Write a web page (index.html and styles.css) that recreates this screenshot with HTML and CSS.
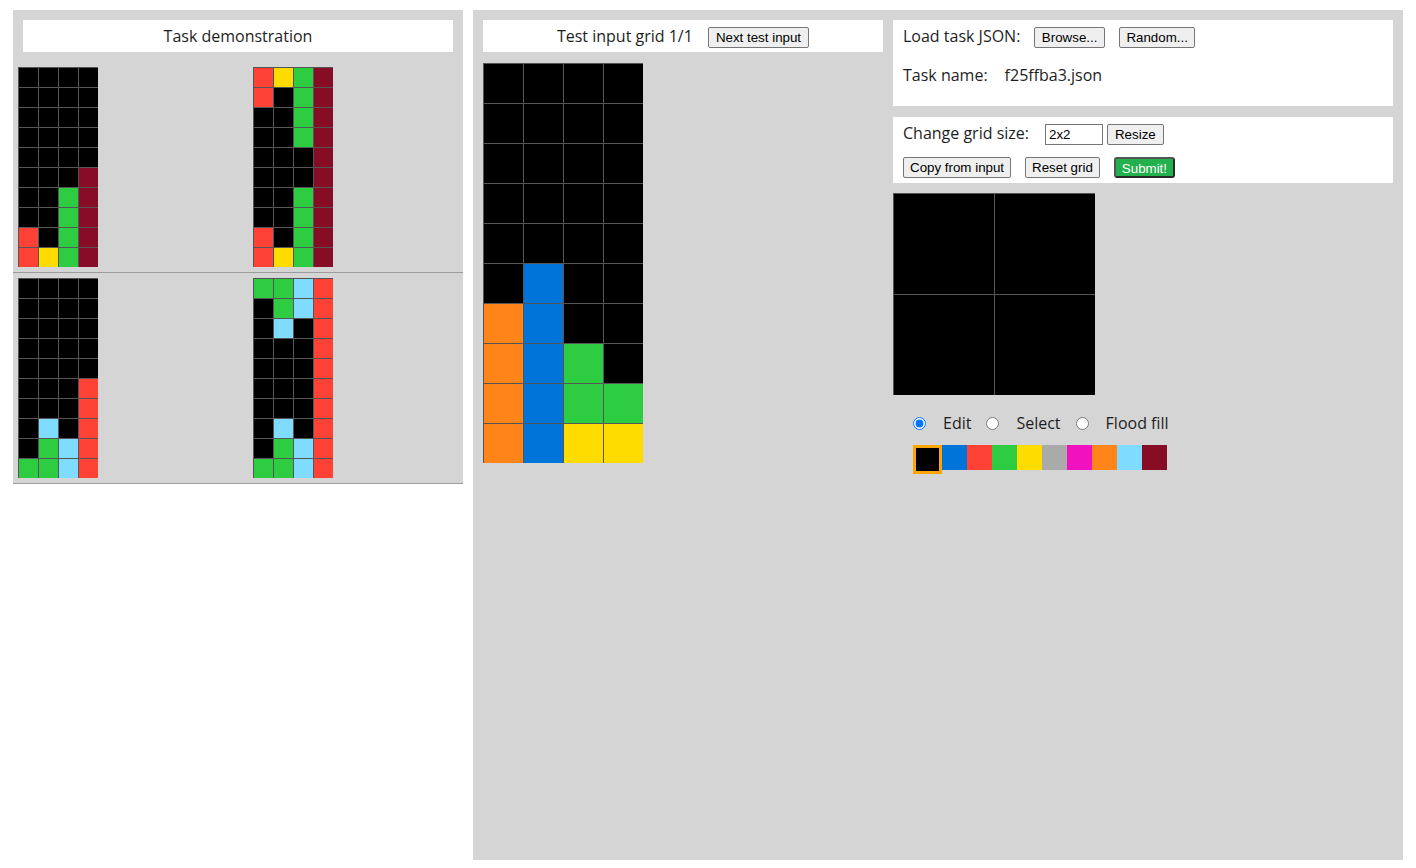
FILE: index.html
```html
<!DOCTYPE html>
<html>
<head>
<meta charset="utf-8">
<title>ARC testing interface</title>
<link rel="stylesheet" href="styles.css">
</head>
<body>
<div class="workspace">
  <section class="demo-view">
    <div class="text-box">Task demonstration</div>
    <div class="pair">
      <div class="pair-cell">
        <div class="grid small">
          <span class="k0"></span><span class="k0"></span><span class="k0"></span><span class="k0"></span>
          <span class="k0"></span><span class="k0"></span><span class="k0"></span><span class="k0"></span>
          <span class="k0"></span><span class="k0"></span><span class="k0"></span><span class="k0"></span>
          <span class="k0"></span><span class="k0"></span><span class="k0"></span><span class="k0"></span>
          <span class="k0"></span><span class="k0"></span><span class="k0"></span><span class="k0"></span>
          <span class="k0"></span><span class="k0"></span><span class="k0"></span><span class="k9"></span>
          <span class="k0"></span><span class="k0"></span><span class="k3"></span><span class="k9"></span>
          <span class="k0"></span><span class="k0"></span><span class="k3"></span><span class="k9"></span>
          <span class="k2"></span><span class="k0"></span><span class="k3"></span><span class="k9"></span>
          <span class="k2"></span><span class="k4"></span><span class="k3"></span><span class="k9"></span>
        </div>
      </div>
      <div class="pair-cell">
        <div class="grid small">
          <span class="k2"></span><span class="k4"></span><span class="k3"></span><span class="k9"></span>
          <span class="k2"></span><span class="k0"></span><span class="k3"></span><span class="k9"></span>
          <span class="k0"></span><span class="k0"></span><span class="k3"></span><span class="k9"></span>
          <span class="k0"></span><span class="k0"></span><span class="k3"></span><span class="k9"></span>
          <span class="k0"></span><span class="k0"></span><span class="k0"></span><span class="k9"></span>
          <span class="k0"></span><span class="k0"></span><span class="k0"></span><span class="k9"></span>
          <span class="k0"></span><span class="k0"></span><span class="k3"></span><span class="k9"></span>
          <span class="k0"></span><span class="k0"></span><span class="k3"></span><span class="k9"></span>
          <span class="k2"></span><span class="k0"></span><span class="k3"></span><span class="k9"></span>
          <span class="k2"></span><span class="k4"></span><span class="k3"></span><span class="k9"></span>
        </div>
      </div>
    </div>
    <div class="pair">
      <div class="pair-cell">
        <div class="grid small">
          <span class="k0"></span><span class="k0"></span><span class="k0"></span><span class="k0"></span>
          <span class="k0"></span><span class="k0"></span><span class="k0"></span><span class="k0"></span>
          <span class="k0"></span><span class="k0"></span><span class="k0"></span><span class="k0"></span>
          <span class="k0"></span><span class="k0"></span><span class="k0"></span><span class="k0"></span>
          <span class="k0"></span><span class="k0"></span><span class="k0"></span><span class="k0"></span>
          <span class="k0"></span><span class="k0"></span><span class="k0"></span><span class="k2"></span>
          <span class="k0"></span><span class="k0"></span><span class="k0"></span><span class="k2"></span>
          <span class="k0"></span><span class="k8"></span><span class="k0"></span><span class="k2"></span>
          <span class="k0"></span><span class="k3"></span><span class="k8"></span><span class="k2"></span>
          <span class="k3"></span><span class="k3"></span><span class="k8"></span><span class="k2"></span>
        </div>
      </div>
      <div class="pair-cell">
        <div class="grid small">
          <span class="k3"></span><span class="k3"></span><span class="k8"></span><span class="k2"></span>
          <span class="k0"></span><span class="k3"></span><span class="k8"></span><span class="k2"></span>
          <span class="k0"></span><span class="k8"></span><span class="k0"></span><span class="k2"></span>
          <span class="k0"></span><span class="k0"></span><span class="k0"></span><span class="k2"></span>
          <span class="k0"></span><span class="k0"></span><span class="k0"></span><span class="k2"></span>
          <span class="k0"></span><span class="k0"></span><span class="k0"></span><span class="k2"></span>
          <span class="k0"></span><span class="k0"></span><span class="k0"></span><span class="k2"></span>
          <span class="k0"></span><span class="k8"></span><span class="k0"></span><span class="k2"></span>
          <span class="k0"></span><span class="k3"></span><span class="k8"></span><span class="k2"></span>
          <span class="k3"></span><span class="k3"></span><span class="k8"></span><span class="k2"></span>
        </div>
      </div>
    </div>
  </section>

  <section class="eval-view">
    <div class="test-column">
      <div class="text-box test-title">
        <span>Test input grid 1/1</span>
        <button class="btn">Next test input</button>
      </div>
      <div class="grid large">
        <span class="k0"></span><span class="k0"></span><span class="k0"></span><span class="k0"></span>
        <span class="k0"></span><span class="k0"></span><span class="k0"></span><span class="k0"></span>
        <span class="k0"></span><span class="k0"></span><span class="k0"></span><span class="k0"></span>
        <span class="k0"></span><span class="k0"></span><span class="k0"></span><span class="k0"></span>
        <span class="k0"></span><span class="k0"></span><span class="k0"></span><span class="k0"></span>
        <span class="k0"></span><span class="k1"></span><span class="k0"></span><span class="k0"></span>
        <span class="k7"></span><span class="k1"></span><span class="k0"></span><span class="k0"></span>
        <span class="k7"></span><span class="k1"></span><span class="k3"></span><span class="k0"></span>
        <span class="k7"></span><span class="k1"></span><span class="k3"></span><span class="k3"></span>
        <span class="k7"></span><span class="k1"></span><span class="k4"></span><span class="k4"></span>
      </div>
    </div>

    <div class="output-column">
      <div class="panel load-panel">
        <div class="row">
          <span class="label">Load task JSON:</span>
          <button class="btn gap">Browse...</button>
          <button class="btn gap">Random...</button>
        </div>
        <div class="row name-row">
          <span class="label">Task name:</span>
          <span class="label task-name">f25ffba3.json</span>
        </div>
      </div>

      <div class="panel size-panel">
        <div class="row">
          <span class="label">Change grid size:</span>
          <input class="size-input" type="text" value="2x2">
          <button class="btn resize">Resize</button>
        </div>
        <div class="row actions">
          <button class="btn">Copy from input</button>
          <button class="btn gap">Reset grid</button>
          <button class="btn gap submit">Submit!</button>
        </div>
      </div>

      <div class="grid output">
        <span class="k0"></span><span class="k0"></span>
        <span class="k0"></span><span class="k0"></span>
      </div>

      <div class="tools">
        <label class="tool"><input type="radio" name="tool" checked><span>Edit</span></label>
        <label class="tool"><input type="radio" name="tool"><span>Select</span></label>
        <label class="tool"><input type="radio" name="tool"><span>Flood fill</span></label>
      </div>

      <div class="palette">
        <span class="sym k0 selected"></span>
        <span class="sym k1"></span>
        <span class="sym k2"></span>
        <span class="sym k3"></span>
        <span class="sym k4"></span>
        <span class="sym k5"></span>
        <span class="sym k6"></span>
        <span class="sym k7"></span>
        <span class="sym k8"></span>
        <span class="sym k9"></span>
      </div>
    </div>
  </section>
</div>
</body>
</html>
```

FILE: styles.css
```css
html, body {
  margin: 0;
  padding: 0;
  background: #fff;
}

body {
  font-family: "Open Sans", "Liberation Sans", sans-serif;
  font-size: 16px;
  color: #1e1e1e;
  padding: 10px 13px 0 13px;
}

.workspace {
  display: flex;
  gap: 10px;
  align-items: flex-start;
}

/* ---------- demonstration ---------- */
.demo-view {
  width: 450px;
  background: #d5d5d5;
  flex: none;
}

.text-box {
  background: #fff;
  margin: 10px;
  height: 32px;
  line-height: 32px;
  text-align: center;
}

.pair {
  display: flex;
  padding: 5px;
  border-bottom: 1px solid #9c9c9c;
}

.pair-cell {
  flex: none;
  width: 235px;
}

.pair-cell + .pair-cell {
  flex: 1;
  width: auto;
}

/* ---------- grids ---------- */
.grid {
  display: grid;
  width: max-content;
}

.grid span {
  display: block;
  box-sizing: border-box;
  border-top: 1px solid #555;
  border-left: 1px solid #555;
}

.grid.small {
  grid-template-columns: repeat(4, 20px);
  grid-auto-rows: 20px;
}

.grid.large {
  grid-template-columns: repeat(4, 40px);
  grid-auto-rows: 40px;
}

.grid.output {
  grid-template-columns: repeat(2, 101px);
  grid-auto-rows: 101px;
}

.k0 { background: #000000; }
.k1 { background: #0074d9; }
.k2 { background: #ff4136; }
.k3 { background: #2ecc40; }
.k4 { background: #ffdc00; }
.k5 { background: #aaaaaa; }
.k6 { background: #f012be; }
.k7 { background: #ff851b; }
.k8 { background: #7fdbff; }
.k9 { background: #870c25; }

/* ---------- evaluation ---------- */
.eval-view {
  width: 930px;
  height: 850px;
  background: #d5d5d5;
  display: flex;
  flex: none;
}

.test-column {
  width: 400px;
  margin: 10px 0 0 10px;
}

.test-column .text-box {
  margin: 0 0 11px 0;
}

.test-title {
  display: flex;
  justify-content: center;
  align-items: center;
  gap: 15px;
}

.test-title .btn {
  margin-top: 2px;
  padding: 0 7px;
}

.output-column {
  width: 500px;
  margin: 10px 0 0 10px;
}

.panel {
  background: #fff;
  box-sizing: border-box;
  padding: 7px 10px 0 10px;
}

.load-panel {
  height: 86px;
  margin-bottom: 11px;
}

.size-panel {
  height: 66px;
  margin-bottom: 10px;
}

.row {
  display: flex;
  align-items: center;
  height: 21px;
}

.row .label {
  align-self: flex-start;
  line-height: 19px;
}

.name-row {
  margin-top: 18px;
}

.task-name {
  margin-left: 17px;
}

.actions {
  margin-top: 12px;
}

.btn {
  box-sizing: border-box;
  font-family: "Liberation Sans", Arial, sans-serif;
  font-size: 13.33px;
  color: #000;
  background: #efefef;
  border: 1px solid #767676;
  border-radius: 2px;
  height: 21px;
  padding: 0 6px;
  margin: 0;
  line-height: 19px;
}

.load-panel .btn {
  padding: 0 6.5px;
}

.gap {
  margin-left: 14px;
}

.resize {
  margin-left: 4px;
  padding: 0 7px;
}

.submit {
  background: #22b14c;
  color: #fff;
  border: 2px solid #2a2a2a;
  border-top-color: #555;
  border-left-color: #555;
  border-radius: 3px;
  padding: 0 6px;
}

.size-input {
  box-sizing: border-box;
  width: 58px;
  height: 21px;
  font-family: "Liberation Sans", Arial, sans-serif;
  font-size: 13.33px;
  border: 1px solid #767676;
  padding: 1px 3px;
  margin: 0 0 0 16px;
  color: #000;
  background: #fff;
}

.tools {
  display: flex;
  align-items: center;
  height: 22px;
  margin-top: 17px;
  padding-left: 20px;
}

.tool {
  display: flex;
  align-items: center;
  margin-right: 15px;
}

.tool input {
  margin: 0;
  width: 13px;
  height: 13px;
}

.tool span {
  margin-left: 17px;
}

.palette {
  display: flex;
  align-items: flex-start;
  margin-top: 11px;
  padding-left: 20px;
}

.sym {
  display: block;
  width: 25px;
  height: 25px;
}

.sym.selected {
  box-sizing: border-box;
  width: 29px;
  height: 29px;
  border: 3px solid #ffa500;
}
```
